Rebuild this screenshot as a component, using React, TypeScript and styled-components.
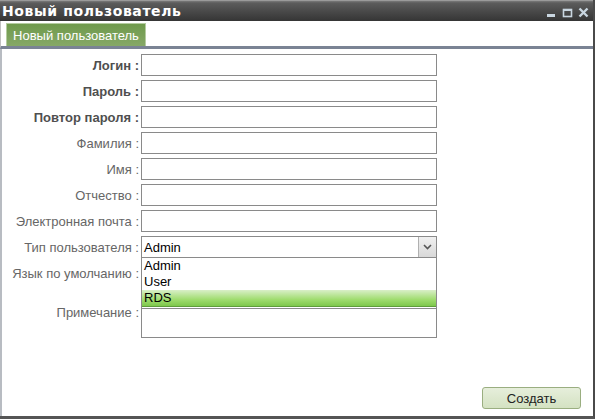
import styled, { createGlobalStyle } from "styled-components";

const Global = createGlobalStyle`
  html, body {
    margin: 0;
    padding: 0;
    background: #ffffff;
  }
  body {
    font-family: "Liberation Sans", Arial, sans-serif;
  }
`;

type Field = { label: string; strong?: boolean };

const fields: Field[] = [
  { label: "Логин", strong: true },
  { label: "Пароль", strong: true },
  { label: "Повтор пароля", strong: true },
  { label: "Фамилия" },
  { label: "Имя" },
  { label: "Отчество" },
  { label: "Электронная почта" },
];

const options = ["Admin", "User", "RDS"];

const App = () => {
  return (
    <Window>
      <Global />
      <TitleBar>
        <Title>Новый пользователь</Title>
        <Controls>
          <svg width="11" height="11" viewBox="0 0 11 11">
            <rect x="1" y="7" width="8" height="3" fill="#c9d6e0" />
          </svg>
          <svg width="11" height="11" viewBox="0 0 11 11">
            <rect x="1.5" y="2.5" width="8" height="7" fill="none" stroke="#c9d6e0" strokeWidth="1.6" />
            <rect x="1" y="2" width="9" height="2" fill="#c9d6e0" />
          </svg>
          <svg width="11" height="11" viewBox="0 0 11 11">
            <path d="M1.5 1.5 L9.5 9.5 M9.5 1.5 L1.5 9.5" stroke="#c9d6e0" strokeWidth="2.4" />
          </svg>
        </Controls>
      </TitleBar>
      <TabStrip>
        <Tab>Новый пользователь</Tab>
      </TabStrip>
      <Body>
        <Form>
          {fields.map((f) => (
            <Row key={f.label}>
              <Label $strong={f.strong}>{f.label} :</Label>
              <Input />
            </Row>
          ))}
          <Row>
            <Label>Тип пользователя :</Label>
            <SelectWrap>
              <Select>
                <span>Admin</span>
                <Arrow>
                  <svg width="9" height="6" viewBox="0 0 9 6">
                    <path d="M1 1 L4.5 4.5 L8 1" fill="none" stroke="#555" strokeWidth="1.6" />
                  </svg>
                </Arrow>
              </Select>
              <DropList>
                {options.map((o) => (
                  <Option key={o} $active={o === "RDS"}>
                    {o}
                  </Option>
                ))}
              </DropList>
            </SelectWrap>
          </Row>
          <Row>
            <Label>Язык по умолчанию :</Label>
            <Input />
          </Row>
          <Row $tall>
            <Label $top>Примечание :</Label>
            <TextArea />
          </Row>
        </Form>
        <Footer>
          <Button>Создать</Button>
        </Footer>
      </Body>
    </Window>
  );
};

const Window = styled.div`
  width: 595px;
  height: 419px;
  box-sizing: border-box;
  display: flex;
  flex-direction: column;
  background: #ffffff;
  border-right: 2px solid #4a4a4a;
  border-bottom: 3px solid #555555;
  overflow: hidden;
`;

const TitleBar = styled.div`
  height: 21px;
  flex-shrink: 0;
  display: flex;
  align-items: center;
  justify-content: space-between;
  padding: 0 4px 0 2px;
  background: linear-gradient(#7a7a7a 0, #5c5c5c 2px, #4a4a4a 10px, #333333 21px);
  border-top: 1px solid #9a9a9a;
  box-sizing: border-box;
`;

const Title = styled.div`
  color: #ffffff;
  font-family: "DejaVu Sans", Verdana, sans-serif;
  font-weight: bold;
  font-size: 14px;
  letter-spacing: 0.6px;
  line-height: 18px;
`;

const Controls = styled.div`
  display: flex;
  gap: 5px;
  align-items: center;
  padding-top: 2px;
`;

const TabStrip = styled.div`
  height: 28px;
  flex-shrink: 0;
  box-sizing: border-box;
  display: flex;
  align-items: flex-end;
  padding-left: 5px;
  border-bottom: 3px solid #7a8394;
  border-left: 1px solid #c0c0c0;
`;

const Tab = styled.div`
  height: 23px;
  width: 140px;
  box-sizing: border-box;
  display: flex;
  align-items: center;
  justify-content: center;
  color: #ffffff;
  font-size: 13px;
  background: linear-gradient(#6f9a4c, #86a867);
  border: 1px solid #b5cca0;
  border-bottom: none;
`;

const Body = styled.div`
  flex: 1;
  display: flex;
  flex-direction: column;
  justify-content: space-between;
  border-left: 2px solid #b8bcc2;
  padding: 5px 0 7px 0;
`;

const Form = styled.div`
  display: flex;
  flex-direction: column;
  gap: 4px;
`;

const Row = styled.div<{ $tall?: boolean }>`
  display: grid;
  grid-template-columns: 137px 296px;
  column-gap: 2px;
  align-items: ${(p) => (p.$tall ? "start" : "center")};
  height: ${(p) => (p.$tall ? "50px" : "22px")};
`;

const Label = styled.div<{ $strong?: boolean; $top?: boolean }>`
  text-align: right;
  font-size: 13px;
  font-weight: ${(p) => (p.$strong ? "bold" : "normal")};
  color: ${(p) => (p.$strong ? "#4f4f4f" : "#666666")};
  white-space: nowrap;
  padding-top: ${(p) => (p.$top ? "17px" : "0")};
`;

const Input = styled.div`
  height: 22px;
  box-sizing: border-box;
  border: 1px solid #8a8a8a;
  background: #ffffff;
`;

const TextArea = styled.div`
  height: 50px;
  box-sizing: border-box;
  border: 1px solid #8a8a8a;
  background: #ffffff;
`;

const SelectWrap = styled.div`
  position: relative;
  height: 22px;
`;

const Select = styled.div`
  height: 22px;
  box-sizing: border-box;
  border: 1px solid #8a8a8a;
  display: flex;
  align-items: center;
  justify-content: space-between;
  padding-left: 2px;
  font-size: 13px;
  color: #000000;
`;

const Arrow = styled.div`
  width: 17px;
  height: 20px;
  display: flex;
  align-items: center;
  justify-content: center;
  background: linear-gradient(#f0f0f0, #d8d8d8);
  border-left: 1px solid #b0b0b0;
`;

const DropList = styled.div`
  position: absolute;
  top: 22px;
  left: 0;
  right: 0;
  background: #ffffff;
  border: 1px solid #8a8a8a;
  border-top: none;
  z-index: 2;
  padding-bottom: 1px;
`;

const Option = styled.div<{ $active?: boolean }>`
  height: 16px;
  line-height: 16px;
  padding-left: 2px;
  font-size: 13px;
  color: #000000;
  background: ${(p) =>
    p.$active ? "linear-gradient(#d9efc8, #9fdc6e 60%, #7ec84c)" : "transparent"};
  border-bottom: ${(p) => (p.$active ? "1px solid #5f9e3a" : "none")};
`;

const Footer = styled.div`
  display: flex;
  justify-content: flex-end;
  padding-right: 12px;
`;

const Button = styled.button`
  width: 99px;
  height: 22px;
  border: 1px solid #9aae80;
  border-radius: 3px;
  background: linear-gradient(#e6eedb, #d4e2c2);
  font-family: "Liberation Sans", Arial, sans-serif;
  font-size: 13px;
  color: #222222;
  padding: 0;
`;

export default App;
